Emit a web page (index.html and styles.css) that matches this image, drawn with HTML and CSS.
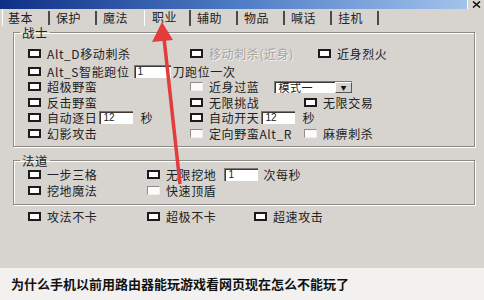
FILE: index.html
```html
<!DOCTYPE html>
<html lang="zh-CN">
<head>
    <meta charset="UTF-8">
    <meta name="viewport" content="width=device-width, initial-scale=1.0">
    <title>职业设置</title>
    <link rel="stylesheet" href="styles.css">
</head>
<body>
    <div class="window">
        <div class="titlebar">
            <span class="close-btn">
                <svg width="11" height="7" viewBox="0 0 11 7"><path d="M2 0.5 L9 6.5 M9 0.5 L2 6.5" stroke="#111" stroke-width="1.6"/></svg>
            </span>
        </div>

        <div class="tabs">
            <span class="tab">基本</span>
            <span class="tab">保护</span>
            <span class="tab before-active">魔法</span>
            <span class="tab active">职业</span>
            <span class="tab">辅助</span>
            <span class="tab">物品</span>
            <span class="tab">喊话</span>
            <span class="tab">挂机</span>
        </div>

        <fieldset class="group warrior">
            <legend>战士</legend>
            <div class="row">
                <label class="item col-left"><span class="check"></span>Alt_D移动刺杀</label>
                <label class="item col-mid-wide disabled"><span class="check"></span>移动刺杀(近身)</label>
                <label class="item"><span class="check"></span>近身烈火</label>
            </div>
            <div class="row">
                <label class="item"><span class="check"></span>Alt_S智能跑位</label>
                <span class="field field-short">1</span>
                <span class="after">刀跑位一次</span>
            </div>
            <div class="row">
                <label class="item col-left"><span class="check"></span>超极野蛮</label>
                <label class="item"><span class="check flat"></span>近身过蓝</label>
                <span class="select">模式一<span class="select-btn">▼</span></span>
            </div>
            <div class="row">
                <label class="item col-left"><span class="check"></span>反击野蛮</label>
                <label class="item col-mid"><span class="check"></span>无限挑战</label>
                <label class="item"><span class="check"></span>无限交易</label>
            </div>
            <div class="row">
                <div class="col-left cell">
                    <label class="item"><span class="check"></span>自动逐日</label>
                    <span class="field">12</span>
                    <span class="unit">秒</span>
                </div>
                <div class="cell">
                    <label class="item"><span class="check"></span>自动开天</label>
                    <span class="field">12</span>
                    <span class="unit">秒</span>
                </div>
            </div>
            <div class="row">
                <label class="item col-left"><span class="check"></span>幻影攻击</label>
                <label class="item col-mid"><span class="check flat"></span>定向野蛮Alt_R</label>
                <label class="item"><span class="check flat"></span>麻痹刺杀</label>
            </div>
        </fieldset>

        <fieldset class="group mage">
            <legend>法道</legend>
            <div class="row">
                <label class="item col-narrow"><span class="check"></span>一步三格</label>
                <label class="item"><span class="check"></span>无限挖地</label>
                <span class="field dig">1</span>
                <span class="after">次每秒</span>
            </div>
            <div class="row">
                <label class="item col-narrow"><span class="check"></span>挖地魔法</label>
                <label class="item"><span class="check flat"></span>快速顶盾</label>
            </div>
        </fieldset>

        <div class="row loose">
            <label class="item col-narrow"><span class="check"></span>攻法不卡</label>
            <label class="item col-third"><span class="check"></span>超极不卡</label>
            <label class="item"><span class="check"></span>超速攻击</label>
        </div>

        <!-- red marker pointing at the active tab -->
        <svg class="marker" width="484" height="268" viewBox="0 0 484 268">
            <line x1="180" y1="184" x2="164" y2="38" stroke="#e23c3c" stroke-width="3.5"/>
            <polygon points="162,22 152,42 173,40" fill="#e23c3c"/>
        </svg>
    </div>

    <div class="caption">为什么手机以前用路由器能玩游戏看网页现在怎么不能玩了</div>
</body>
</html>
```

FILE: styles.css
```css
* {
    margin: 0;
    padding: 0;
    box-sizing: border-box;
}

body {
    width: 484px;
    height: 300px;
    overflow: hidden;
    background: #f2f1ef;
    font-family: "Noto Sans CJK SC", "Liberation Sans", sans-serif;
    color: #222;
}

.window {
    position: relative;
    height: 268px;
    background: #d7d4cf;
    font-size: 12px;
    letter-spacing: 0.6px;
}

.titlebar {
    height: 9px;
    display: flex;
    justify-content: flex-end;
    background: linear-gradient(90deg, #0e2f86, #4f7dc6 50%, #a8c8ee);
}

.close-btn {
    width: 17px;
    height: 9px;
    display: flex;
    align-items: center;
    justify-content: center;
    background: #d9d6d0;
    border-left: 1px solid #fff;
}

.tabs {
    height: 17px;
    display: flex;
    padding-left: 2px;
    border-left: 1px solid #fff;
    margin-left: 2px;
}

.tab {
    width: 47px;
    height: 14px;
    margin-top: 2px;
    padding-left: 6px;
    line-height: 13px;
    border-right: 2px solid #4a4a4a;
}

.tab:first-child {
    margin-left: -3px;
    width: 48px;
}

.tab.before-active {
    border-right: none;
}

.tab.active {
    height: 16px;
    margin-top: 1px;
    padding-left: 7px;
    line-height: 14px;
    border-left: 1px solid #fff;
}

.group {
    margin: 0 9px 0 13px;
    border: 1px solid #8d8b87;
    box-shadow: inset 1px 1px 0 #fff, 1px 1px 0 #fff;
    padding-left: 14px;
}

.group legend {
    margin-left: -8px;
    padding: 0 2px;
    line-height: 13px;
    font-size: 12.5px;
}

.warrior {
    padding-top: 7px;
    padding-bottom: 5px;
}

.mage {
    margin-top: 7px;
    padding-top: 0;
    padding-bottom: 6px;
}

.row {
    height: 15.5px;
    display: flex;
    align-items: center;
    white-space: nowrap;
}

.warrior .row:first-of-type {
    margin-bottom: 2px;
}

.row.loose {
    margin-top: 4px;
    padding-left: 28px;
}

.item {
    display: flex;
    align-items: center;
}

.cell {
    display: flex;
    align-items: center;
}

.col-left {
    width: 162px;
}

.col-mid-wide {
    width: 128px;
}

.col-mid {
    width: 114px;
}

.col-narrow {
    width: 119px;
}

.col-third {
    width: 107px;
}

.check {
    width: 13px;
    height: 9px;
    margin-right: 6px;
    background: #fff;
    border: 2px solid #1b1b1b;
    flex-shrink: 0;
}

.check.flat {
    border: 1px solid #eee;
    border-top-color: #8f8d89;
    border-left-color: #8f8d89;
    background: #fbfbfb;
}

.disabled {
    color: #a5a39f;
    text-shadow: 1px 1px 0 #f4f3f1;
}

.field {
    width: 34px;
    height: 13px;
    margin-left: 1px;
    padding-left: 3px;
    background: #fff;
    border-top: 1px solid #7b7975;
    border-left: 1px solid #7b7975;
    box-shadow: inset 1px 1px 0 #3a3a3a;
    font-family: "Liberation Sans", sans-serif;
    font-size: 10px;
    line-height: 12px;
    letter-spacing: 0;
}

.field-short {
    width: 37px;
    margin-left: 4px;
}

.field.dig {
    margin-left: 8px;
}

.after {
    margin-left: 2px;
}

.mage .after {
    margin-left: 5px;
}

.unit {
    margin-left: 7px;
}

.cell .item + .field {
    margin-left: 2px;
}

.select {
    position: relative;
    width: 78px;
    height: 12px;
    margin-left: 15px;
    padding-left: 3px;
    background: #fff;
    border-top: 1px solid #7b7975;
    border-left: 1px solid #7b7975;
    box-shadow: inset 1px 1px 0 #3a3a3a;
    font-size: 11px;
    line-height: 11px;
    display: flex;
    justify-content: space-between;
}

.select-btn {
    width: 17px;
    height: 11px;
    background: #d7d4cf;
    border: 1px solid #fff;
    border-right-color: #555;
    border-bottom-color: #555;
    font-size: 6px;
    line-height: 9px;
    text-align: center;
    color: #111;
}

.marker {
    position: absolute;
    left: 0;
    top: 0;
    pointer-events: none;
}

.caption {
    height: 32px;
    padding-left: 11px;
    line-height: 32px;
    font-size: 13px;
    font-weight: bold;
    color: #111;
    letter-spacing: 0;
}
```
